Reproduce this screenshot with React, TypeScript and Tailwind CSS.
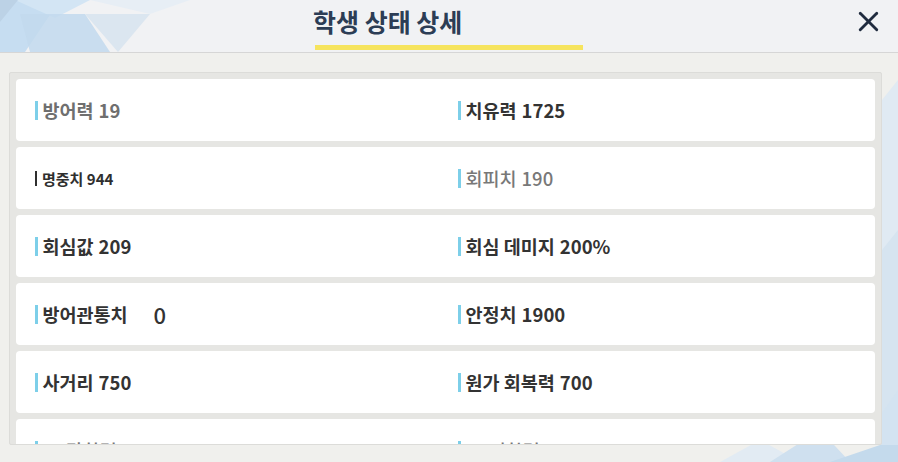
import { X } from 'lucide-react'

type Stat = {
  label: string
  value: string
  tone?: 'dark' | 'faded' | 'light'
  small?: boolean
  spaced?: boolean
}

const rows: [Stat, Stat][] = [
  [
    { label: '방어력', value: '19', tone: 'faded' },
    { label: '치유력', value: '1725' },
  ],
  [
    { label: '명중치', value: '944', small: true },
    { label: '회피치', value: '190', tone: 'light' },
  ],
  [
    { label: '회심값', value: '209' },
    { label: '회심 데미지', value: '200%' },
  ],
  [
    { label: '방어관통치', value: '0', spaced: true },
    { label: '안정치', value: '1900' },
  ],
  [
    { label: '사거리', value: '750' },
    { label: '원가 회복력', value: '700' },
  ],
  [
    { label: 'CC강화력', value: '100', tone: 'light' },
    { label: 'CC저항력', value: '100', tone: 'light' },
  ],
]

const font = { fontFamily: '"Noto Sans CJK KR", "Noto Sans", sans-serif' }

function StatCell({ stat }: { stat: Stat }) {
  if (stat.small) {
    return (
      <div className="flex items-center text-[15px] font-bold text-[#2f2f2f] leading-none">
        <span className="w-[2px] h-[15px] bg-[#2f2f2f] mr-[5px]" />
        <span>{stat.label} {stat.value}</span>
      </div>
    )
  }

  const color =
    stat.tone === 'faded'
      ? 'text-[#6f6f6f] font-bold'
      : stat.tone === 'light'
        ? 'text-[#787878] font-medium'
        : 'text-[#333333] font-bold'

  return (
    <div className={`flex items-center text-[18.5px] leading-none ${color}`}>
      <span className="w-[2.5px] h-[19px] bg-[#7dcfe9] mr-[5px]" />
      <span>{stat.label}</span>
      {stat.spaced ? (
        <span className="ml-[26px] text-[22px] font-medium text-[#333333]">{stat.value}</span>
      ) : (
        <span className="ml-[5px]">{stat.value}</span>
      )}
    </div>
  )
}

function Background() {
  return (
    <svg className="absolute inset-0 pointer-events-none" width="898" height="462" viewBox="0 0 898 462">
      <polygon points="882,100 898,80 898,300 882,330" fill="#e0eaf3" />
      <polygon points="882,250 898,230 898,440 882,462" fill="#d6e4f0" />
      <polygon points="720,462 760,440 800,462" fill="#e2ebf3" />
      <polygon points="770,462 820,430 850,462" fill="#cfe0ef" />
      <polygon points="830,462 880,445 898,410 898,462" fill="#c4daec" />
      <polygon points="860,445 898,445 898,390" fill="#d3e3f1" />
    </svg>
  )
}

export default function App() {
  return (
    <div className="relative w-[898px] h-[462px] overflow-hidden bg-[#f0f0ed]" style={font}>
      <Background />
      <div className="relative h-[53px] border-b-[1.5px] border-[#d6d6d6] bg-[#f1f2f4]">
        <svg className="absolute left-0 top-0 pointer-events-none" width="200" height="52" viewBox="0 0 200 52">
          <polygon points="0,0 60,0 25,52 0,52" fill="#c6ddf1" />
          <polygon points="15,0 90,0 55,18" fill="#d3e5f4" />
          <polygon points="20,14 85,14 110,52 30,52" fill="#c2d9ed" opacity="0.85" />
          <polygon points="85,14 150,14 118,52" fill="#dbe6f0" />
          <polygon points="90,0 190,0 150,14" fill="#e7eef5" />
          <polygon points="0,0 18,0 0,22" fill="#bcd2e6" />
        </svg>
        <div className="relative w-[268px] mx-auto pt-[4px] h-full flex flex-col">
          <div className="-ml-[2px] text-[25px] font-bold text-[#2c3d55] leading-[34px]">학생 상태 상세</div>
          <div className="mt-[7px] h-[5px] bg-[#f6e45e]" />
        </div>
        <button className="absolute right-[13px] top-[5px] text-[#1f2b3e]">
          <X size={33} strokeWidth={2.1} />
        </button>
      </div>

      <div className="relative mx-[9px] mt-[19px] h-[373px] w-[873px] overflow-hidden rounded-[2px] border border-[#dcdcd9] bg-[#e6e6e3] p-[6px] flex flex-col gap-[6px]">
        {rows.map(([left, right], i) => (
          <div
            key={i}
            className="h-[62px] shrink-0 rounded-[4px] bg-white pl-[19px] grid grid-cols-[423px_1fr] items-center"
          >
            <StatCell stat={left} />
            <StatCell stat={right} />
          </div>
        ))}
      </div>
    </div>
  )
}
